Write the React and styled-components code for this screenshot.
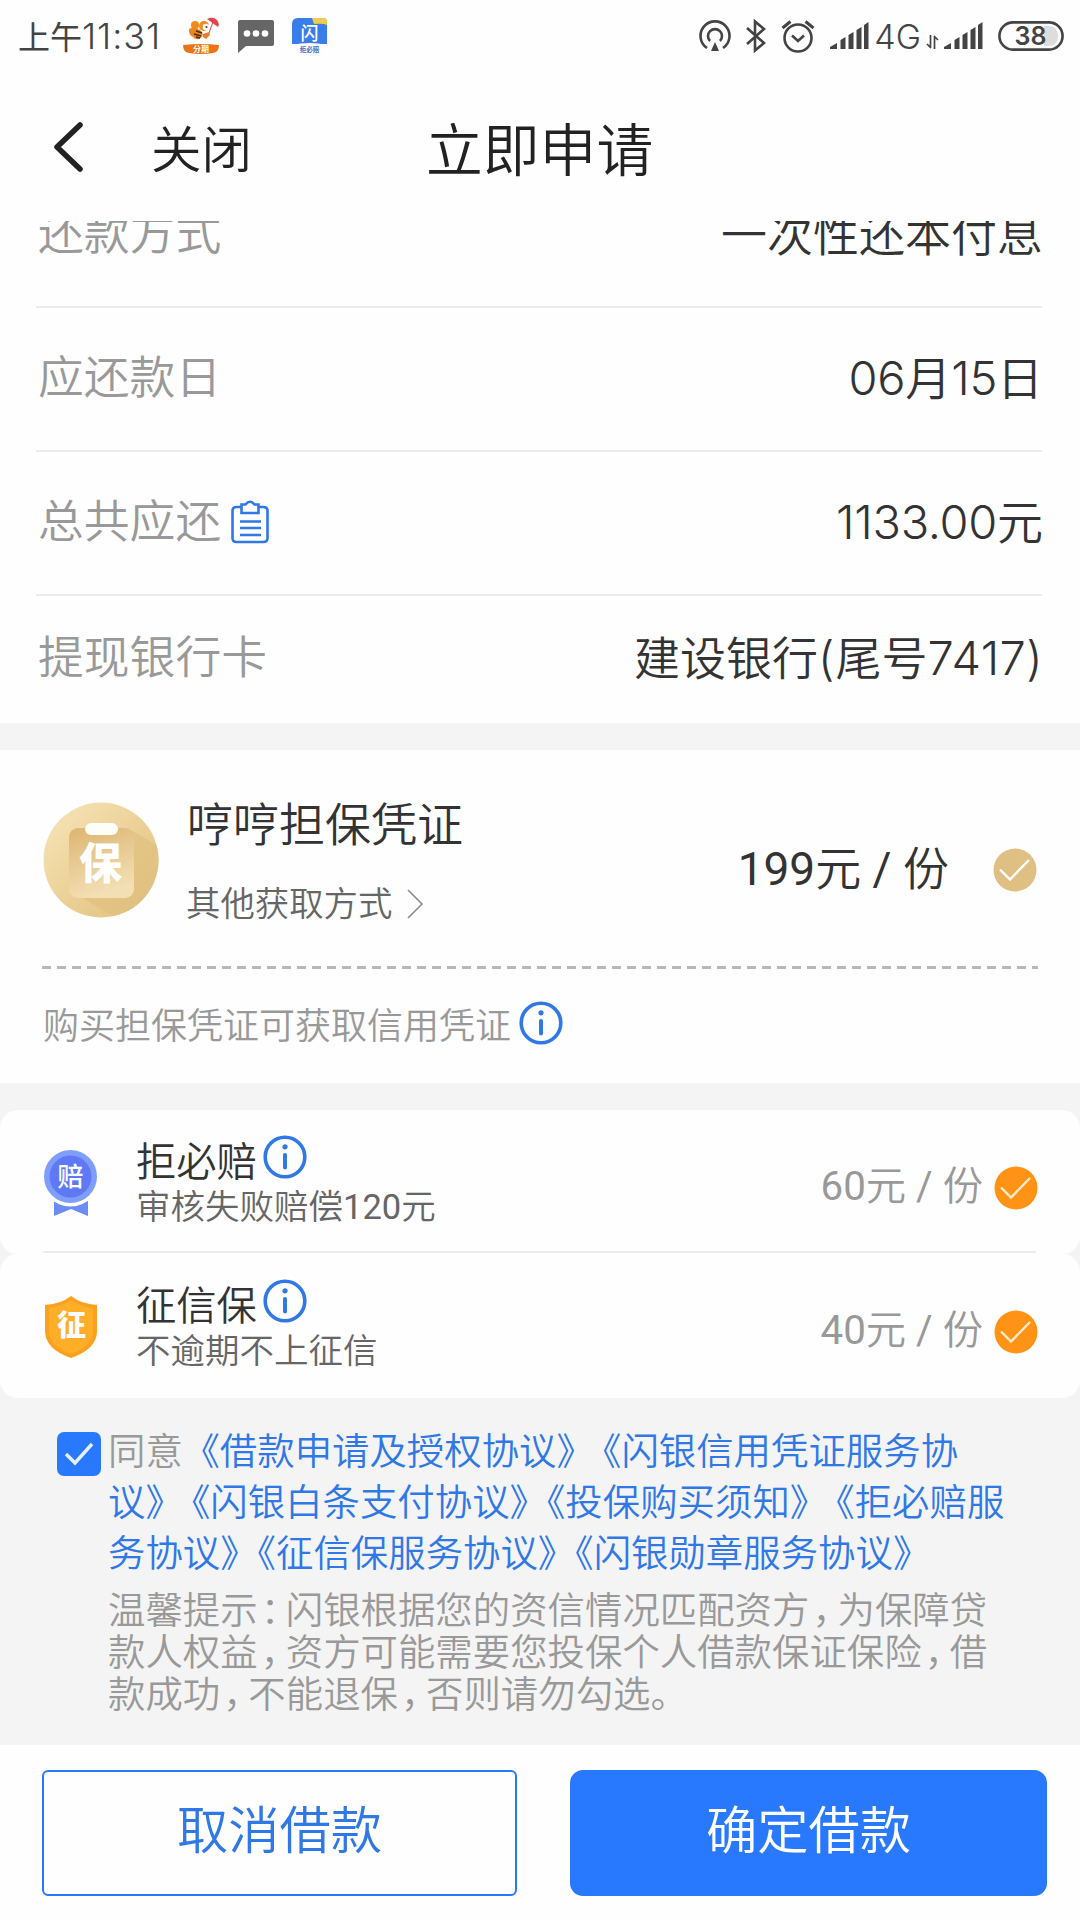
import React, { useState } from 'react'
import styled, { createGlobalStyle } from 'styled-components'

const GlobalStyle = createGlobalStyle`
	* {
		box-sizing: border-box;
	}
	body {
		margin: 0;
		background-color: #fff;
		font-family: Roboto, "Noto Sans CJK SC", sans-serif;
		font-weight: 350;
		color: #333;
	}
`

const Container = styled.div`
	width: 1080px;
	height: 1920px;
	display: flex;
	flex-direction: column;
	overflow: hidden;
	background-color: #fefefe;
`

const StatusBar = styled.div`
	height: 76px;
	display: flex;
	justify-content: space-between;
	align-items: flex-start;
	padding: 17px 16px 0 18px;
	color: #444;
`

const StatusGroup = styled.div`
	height: 38px;
	display: flex;
	align-items: center;
	gap: ${props => props.gap || '0'};
`

const Time = styled.span`
	width: 146px;
	padding-top: 2px;
	font-size: 32px;
	line-height: 38px;
	font-weight: 400;
	white-space: nowrap;
`

const Clock = styled.span`
	font-family: Inter, sans-serif;
	font-size: 36px;
	font-weight: 300;
	letter-spacing: 0.9px;
`

const Network = styled.span`
	padding-top: 1px;
	font-family: Inter, sans-serif;
	font-size: 34px;
	line-height: 38px;
	font-weight: 300;
`

const Header = styled.div`
	height: 145px;
	display: grid;
	grid-template-columns: 151px 275px 1fr;
	align-items: center;
	color: #222;
`

const BackButton = styled.div`
	padding-left: 52px;
	display: flex;
	margin-top: -4px;
`

const Close = styled.span`
	padding-top: 4px;
	font-size: 50.5px;
	line-height: 60px;
`

const Title = styled.h1`
	margin: 0;
	padding-top: 6px;
	font-size: 56.8px;
	line-height: 70px;
	font-weight: 350;
`

const Content = styled.div`
	height: 1524px;
	flex-shrink: 0;
	overflow: hidden;
	background-color: #f4f4f4;
`

const Details = styled.div`
	height: 502px;
	overflow: hidden;
	background-color: #fefefe;
`

const DetailRow = styled.div`
	height: ${props => props.height || '144px'};
	margin: 0 38px 0 36px;
	padding-left: 2px;
	display: flex;
	align-items: center;
	justify-content: space-between;
	border-bottom: ${props => props.last ? 'none' : '2px solid #ebebeb'};
	&:first-child {
		margin-top: -57px;
	}
`

const Label = styled.div`
	display: flex;
	align-items: center;
	gap: 10px;
	font-size: 45.8px;
	line-height: 60px;
	color: #999;
	svg {
		margin-top: -2px;
	}
`

const Value = styled.div`
	margin-right: -1px;
	padding-bottom: 2px;
	font-family: Inter, "Noto Sans CJK SC", sans-serif;
	font-size: 46px;
	line-height: 60px;
	white-space: nowrap;
`

const Digits = styled.span`
	font-size: 47px;
	font-weight: 300;
	letter-spacing: ${props => props.spacing || '-0.3px'};
`

const Latin = styled.span`
	font-weight: 400;
`

const Voucher = styled.div`
	height: 333px;
	margin-top: 27px;
	padding: 51px 42px 0 42px;
	background-color: #fefefe;
`

const VoucherTop = styled.div`
	height: 165px;
	display: flex;
`

const VoucherInfo = styled.div`
	margin-left: 27px;
	flex: 1;
`

const VoucherName = styled.div`
	margin-top: -6px;
	font-size: 46px;
	line-height: 60px;
`

const OtherWays = styled.div`
	margin-top: 26px;
	margin-left: -1px;
	display: flex;
	align-items: center;
	gap: 14px;
	font-size: 34.4px;
	line-height: 46px;
	color: #666;
`

const VoucherPrice = styled.div`
	height: 136px;
	display: flex;
	align-items: center;
	gap: 44px;
	margin-right: 1px;
	font-size: 46px;
	line-height: 60px;
	svg {
		margin-top: 2px;
	}
`

const Dashes = styled.div`
	height: 3px;
	background-image: repeating-linear-gradient(90deg, #b8b8b8 0 9px, transparent 9px 15px);
`

const VoucherHint = styled.div`
	margin-top: 33px;
	padding-left: 1px;
	display: flex;
	align-items: center;
	gap: 8px;
	font-size: 36px;
	line-height: 50px;
	color: #999;
	svg {
		margin-top: -9px;
	}
`

const Products = styled.div`
	margin-top: 27px;
`

const Product = styled.div`
	height: 144px;
	padding: 2px 42px 0 43px;
	display: flex;
	align-items: center;
	background-color: #fefefe;
	border-radius: 18px;
	position: relative;
`

const ProductLine = styled.div`
	position: absolute;
	bottom: 1px;
	left: 43px;
	right: 44px;
	height: 2px;
	background-color: #ebebeb;
`

const ProductInfo = styled.div`
	flex: 1;
	margin-left: 38px;
`

const ProductName = styled.div`
	height: 47px;
	padding-top: 1px;
	display: flex;
	align-items: center;
	gap: 6px;
	font-size: 40.3px;
	line-height: 48px;
	svg {
		margin-top: -12px;
	}
`

const ProductDesc = styled.div`
	font-size: 34.5px;
	line-height: 42px;
	color: #666;
`

const ProductPrice = styled.div`
	margin-top: 8px;
	display: flex;
	align-items: center;
	gap: 11px;
	font-size: 40.3px;
	line-height: 50px;
	color: #999;
	svg {
		margin-top: 2px;
	}
`

const Agreement = styled.div`
	padding: 29px 0 0 57px;
	display: flex;
	align-items: flex-start;
	gap: 7px;
`

const Checkbox = styled.div`
	width: 44px;
	height: 44px;
	margin-top: 5px;
	border-radius: 7px;
	background-color: #2979ff;
	display: flex;
	align-items: center;
	justify-content: center;
`

const Line = styled.div`
	font-size: 37.4px;
	line-height: ${props => props.height};
	color: ${props => props.color};
	white-space: pre;
`

const Gray = styled.span`
	color: #999;
`

const Open = styled.span`
	display: inline-block;
	padding-left: 9.2px;
	font-feature-settings: "halt";
`

const Shut = styled.span`
	display: inline-block;
	padding-right: 9.2px;
	font-feature-settings: "halt";
`

const Comma = styled.span`
	display: inline-block;
	padding: 0 6.4px 0 3px;
	font-feature-settings: "halt";
`

const Tips = styled.div`
	margin-top: 10px;
`

const Footer = styled.div`
	flex: 1;
	padding: 25px 33px 0 42px;
	display: grid;
	grid-template-columns: 475px 477px;
	column-gap: 53px;
	background-color: #fefefe;
`

const Button = styled.button`
	height: 126px;
	padding: 0 0 13px;
	border: 2px solid #2979ff;
	border-radius: ${props => props.primary ? '13px' : '6px'};
	background-color: ${props => props.primary ? '#2979ff' : '#fefefe'};
	color: ${props => props.primary ? '#fff' : '#2f78e6'};
	font-family: "Noto Sans CJK SC", sans-serif;
	font-size: 51.3px;
	font-weight: 350;
	cursor: pointer;
`

const InfoIcon = () => (
	<svg width="44" height="44" viewBox="0 0 44 44" fill="none">
		<circle cx="22" cy="22" r="19.8" stroke="#2f78e6" strokeWidth="3.6" />
		<circle cx="22" cy="11.8" r="2.6" fill="#2f78e6" />
		<path d="M22 20v12.500" stroke="#2f78e6" strokeWidth="4" strokeLinecap="round" />
	</svg>
)

const CheckIcon = ({ color, tick = '#fff' }) => (
	<svg width="44" height="44" viewBox="0 0 44 44" fill="none">
		<circle cx="22" cy="22" r="21.5" fill={color} />
		<path d="M7 21.5l10 10L36 12" stroke={tick} strokeWidth="2.4" />
	</svg>
)

const ClipboardIcon = () => (
	<svg width="38" height="44" viewBox="0 0 38 44" fill="none" stroke="#2f78e6" strokeWidth="2.6">
		<path d="M10 7H5.5Q1.500 7 1.500 11v27q0 4 4 4h27q4 0 4-4V11q0-4-4-4H28" />
		<path d="M10.500 13V4.500h4Q19-1 23.500 4.500h4V13z" />
		<path d="M9 21.500h21M9 28h21M9 35h21" />
	</svg>
)

const VoucherIcon = () => (
	<svg width="118" height="118" viewBox="0 0 118 118">
		<defs>
			<linearGradient id="gold" x1="0" y1="0" x2="1" y2="1">
				<stop offset="0" stopColor="#f8e6ba" />
				<stop offset="1" stopColor="#dfbd78" />
			</linearGradient>
			<linearGradient id="board" x1="0" y1="0" x2="0.3" y2="1">
				<stop offset="0" stopColor="#dcb571" />
				<stop offset="1" stopColor="#f3dfb4" />
			</linearGradient>
			<clipPath id="disc"><circle cx="59" cy="59" r="57.500" /></clipPath>
		</defs>
		<g clipPath="url(#disc)">
			<rect width="118" height="118" fill="url(#gold)" />
			<path d="M89 29l40 24v66H78L35 94l54-5z" fill="#e0c080" opacity=".7" />
			<rect x="27" y="27" width="65" height="70" rx="9" fill="url(#board)" />
		</g>
		<rect x="43" y="22" width="33" height="12" rx="6" fill="#fffdf8" />
		<text x="58.500" y="78" fontSize="43" fontWeight="900" textAnchor="middle" fill="#fff" fontFamily="Noto Sans CJK SC">保</text>
	</svg>
)

const MedalIcon = () => (
	<svg width="55" height="68" viewBox="0 0 55 68">
		<path d="M11 48h34v19l-17-7-17 7z" fill="#6b8cf5" />
		<circle cx="27.500" cy="27.500" r="30" fill="#fefefe" />
		<circle cx="27.500" cy="27.500" r="26.500" fill="#7f9dfa" />
		<circle cx="27.500" cy="27.500" r="21" fill="#5f78f5" />
		<text x="27.500" y="37" fontSize="26" fontWeight="500" textAnchor="middle" fill="#fff" fontFamily="Noto Sans CJK SC">赔</text>
	</svg>
)

const ShieldIcon = () => (
	<svg width="55" height="64" viewBox="0 0 55 64">
		<path d="M28 1Q38 9 54 10v26Q54 54 28 63 2 54 2 36V10Q18 9 28 1z" fill="#fba01f" />
		<path d="M28 5Q38 12 50 13v23Q50 51 28 59 6 51 6 36V13Q18 12 28 5z" fill="#ffae27" />
		<text x="28.500" y="41" fontSize="29" fontWeight="900" textAnchor="middle" fill="#fff" fontFamily="Noto Sans CJK SC">征</text>
	</svg>
)

const BeeIcon = () => (
	<svg width="38" height="38" viewBox="0 0 38 38">
		<path d="M25 2Q31-1 35 3q3 4 1 7z" fill="#e8434c" />
		<path d="M31 5l-4 11" stroke="#d8474c" strokeWidth="1" />
		<circle cx="13" cy="8" r="4" fill="#f08a1d" />
		<path d="M7 12q5-3 11 1 5 4 1 8-5 3-8-1-5-3-4-8z" fill="#ec861f" />
		<circle cx="22" cy="9" r="5" fill="#ef8b22" />
		<circle cx="24" cy="10" r="3.300" fill="#fff" />
		<circle cx="24.500" cy="10" r="1.100" fill="#442" />
		<path d="M21 17l6-2 1 3-4 4-3-2z" fill="#ee7a2b" />
		<path d="M12 17l7 2M14 14l6 2M14 20l4 1" stroke="#4b2a13" strokeWidth="1.500" />
		<path d="M1 28q18-2 36 0 0 7-6 8-12 2-24 0-6-1-6-8z" fill="#ec7417" />
		<text x="19" y="35" fontSize="8" fontWeight="700" textAnchor="middle" fill="#fff" fontFamily="Noto Sans CJK SC">分期</text>
	</svg>
)

const ChatIcon = () => (
	<svg width="36" height="34" viewBox="0 0 36 34">
		<path d="M2 1h32q2 0 2 2v22q0 2-2 2H8l-8 7V3q0-2 2-2z" fill="#666" />
		<circle cx="9" cy="14.500" r="3.300" fill="#fff" />
		<circle cx="18" cy="14.500" r="3.300" fill="#fff" />
		<circle cx="27" cy="14.500" r="3.300" fill="#fff" />
	</svg>
)

const LoanIcon = () => (
	<svg width="36" height="38" viewBox="0 0 36 38">
		<path d="M6 1h25q4 0 4 4v22H0V7q0-6 6-6z" fill="#3b7de8" />
		<path d="M20 1h11q4 0 4 4v3q-4-2-13-1z" fill="#f1cb4e" />
		<path d="M0 28q17-4 35 0v9H0z" fill="#fefefe" />
		<text x="17.500" y="23" fontSize="18" fontWeight="500" textAnchor="middle" fill="#fff" fontFamily="Noto Sans CJK SC">闪</text>
		<text x="17.500" y="35" fontSize="6.500" fontWeight="700" textAnchor="middle" fill="#3b6fc8" fontFamily="Noto Sans CJK SC">拒必赔</text>
	</svg>
)

const CastIcon = () => (
	<svg width="32" height="34" viewBox="0 0 32 34" fill="none" stroke="#444" strokeWidth="2.600">
		<path d="M8 29A14.500 14.500 0 1 1 24 29" />
		<path d="M11 22A7 7 0 1 1 21 22" />
		<path d="M16 23l4 9h-8z" fill="#444" stroke="none" />
	</svg>
)

const BluetoothIcon = () => (
	<svg width="20" height="34" viewBox="0 0 20 34" fill="none" stroke="#444" strokeWidth="2.600">
		<path d="M1 9l17 15-9 7.500v-29L18 10 1 25" />
	</svg>
)

const AlarmIcon = () => (
	<svg width="34" height="34" viewBox="0 0 34 34" fill="none" stroke="#444" strokeWidth="2.600">
		<circle cx="17" cy="19" r="13.500" />
		<path d="M11 16.500l6 5.500 6-5.500" />
		<path d="M1.500 9l8-6.500M32.500 9l-8-6.500" strokeWidth="3" />
	</svg>
)

const SignalIcon = () => (
	<svg width="39" height="28" viewBox="0 0 39 28" fill="#444">
		<path d="M0 27l0-2 7-4v6zM10.500 27V18l5-3v12zM18.500 27V13l5-3v17zM26.500 27V8l5-3v22zM34 27V3l4.500-3v27z" />
	</svg>
)

const DataIcon = () => (
	<svg width="13" height="26" viewBox="0 0 13 26" fill="none" stroke="#444" strokeWidth="1.700">
		<path d="M4.500 12v12M5 25L1 21M8.500 26V14M8 13l4 4" />
	</svg>
)

const BatteryIcon = () => (
	<svg width="66" height="30" viewBox="0 0 66 30">
		<path d="M46 5h5q9 1 9 10t-9 10h-5z" fill="#ddd" />
		<rect x="1.400" y="1.400" width="63.200" height="27.200" rx="13.600" fill="none" stroke="#444" strokeWidth="2.600" />
		<text x="32.500" y="24" fontSize="25" fontWeight="600" textAnchor="middle" fill="#444" fontFamily="Inter">38</text>
	</svg>
)

// brackets and commas are set tighter than a full em
const punct = (text) => text.split('').map((char, i) => {
	if (char === '《') return <Open key={i}>{char}</Open>
	if (char === '》') return <Shut key={i}>{char}</Shut>
	if ('，：'.includes(char)) return <Comma key={i}>{char}</Comma>
	return char
})

const products = [
	{ name: '拒必赔', desc: <>审核失败赔偿<Latin>120</Latin>元</>, price: 60, icon: <MedalIcon /> },
	{ name: '征信保', desc: '不逾期不上征信', price: 40, icon: <ShieldIcon /> },
]

const App = () => {
	const [agreed, setAgreed] = useState(true)

	return (
		<Container>
			<GlobalStyle />
			<StatusBar>
				<StatusGroup gap="18px">
					<Time>上午<Clock>11:31</Clock></Time>
					<BeeIcon />
					<ChatIcon />
					<LoanIcon />
				</StatusGroup>
				<StatusGroup gap="15px">
					<CastIcon />
					<BluetoothIcon />
					<AlarmIcon />
					<StatusGroup gap="5px">
						<SignalIcon />
						<Network>4G</Network>
						<DataIcon />
						<SignalIcon />
					</StatusGroup>
					<BatteryIcon />
				</StatusGroup>
			</StatusBar>
			<Header>
				<BackButton>
					<svg width="32" height="52" viewBox="0 0 32 52" fill="none">
						<path d="M28 4L5 26l23 22" stroke="#222" strokeWidth="5.500" strokeLinecap="round" strokeLinejoin="round" />
					</svg>
				</BackButton>
				<Close>关闭</Close>
				<Title>立即申请</Title>
			</Header>
			<Content>
				<Details>
					<DetailRow>
						<Label>还款方式</Label>
						<Value>一次性还本付息</Value>
					</DetailRow>
					<DetailRow>
						<Label>应还款日</Label>
						<Value><Digits>06</Digits>月<Digits>15</Digits>日</Value>
					</DetailRow>
					<DetailRow>
						<Label>总共应还<ClipboardIcon /></Label>
						<Value><Digits>1133.00</Digits>元</Value>
					</DetailRow>
					<DetailRow height="126px" last>
						<Label>提现银行卡</Label>
						<Value>建设银行<Digits spacing="1px">(</Digits>尾号<Digits spacing="0.4px">7417)</Digits></Value>
					</DetailRow>
				</Details>
				<Voucher>
					<VoucherTop>
						<VoucherIcon />
						<VoucherInfo>
							<VoucherName>哼哼担保凭证</VoucherName>
							<OtherWays>
								其他获取方式
								<svg width="18" height="30" viewBox="0 0 18 30" fill="none">
									<path d="M2 1l14 14L2 29" stroke="#888" strokeWidth="1.500" />
								</svg>
							</OtherWays>
						</VoucherInfo>
						<VoucherPrice>
							<div><Latin>199</Latin>元<Latin> / </Latin>份</div>
							<CheckIcon color="#dfc082" />
						</VoucherPrice>
					</VoucherTop>
					<Dashes />
					<VoucherHint>购买担保凭证可获取信用凭证<InfoIcon /></VoucherHint>
				</Voucher>
				<Products>
					{products.map((item, i) => (
						<Product key={item.name}>
							{item.icon}
							<ProductInfo>
								<ProductName>{item.name}<InfoIcon /></ProductName>
								<ProductDesc>{item.desc}</ProductDesc>
							</ProductInfo>
							<ProductPrice>
								<div><Latin>{item.price}</Latin>元<Latin> / </Latin>份</div>
								<CheckIcon color="#ff9315" tick="#ffeccb" />
							</ProductPrice>
							{i === 0 && <ProductLine />}
						</Product>
					))}
				</Products>
				<Agreement>
					<Checkbox onClick={() => setAgreed(!agreed)}>
						{agreed && (
							<svg width="30" height="24" viewBox="0 0 30 24" fill="none">
								<path d="M2 12l9 9L28 2" stroke="#e6f0ff" strokeWidth="3.400" />
							</svg>
						)}
					</Checkbox>
					<div>
						<Line height="51px" color="#2f78e6"><Gray>同意</Gray> {punct('《借款申请及授权协议》 《闪银信用凭证服务协')}</Line>
						<Line height="51px" color="#2f78e6">{punct('议》 《闪银白条支付协议》《投保购买须知》 《拒必赔服')}</Line>
						<Line height="51px" color="#2f78e6">{punct('务协议》《征信保服务协议》《闪银勋章服务协议》')}</Line>
						<Tips>
							<Line height="42px" color="#999">{punct('温馨提示：闪银根据您的资信情况匹配资方，为保障贷')}</Line>
							<Line height="42px" color="#999">{punct('款人权益，资方可能需要您投保个人借款保证保险，借')}</Line>
							<Line height="42px" color="#999">{punct('款成功，不能退保，否则请勿勾选。')}</Line>
						</Tips>
					</div>
				</Agreement>
			</Content>
			<Footer>
				<Button>取消借款</Button>
				<Button primary>确定借款</Button>
			</Footer>
		</Container>
	)
}

export default App
